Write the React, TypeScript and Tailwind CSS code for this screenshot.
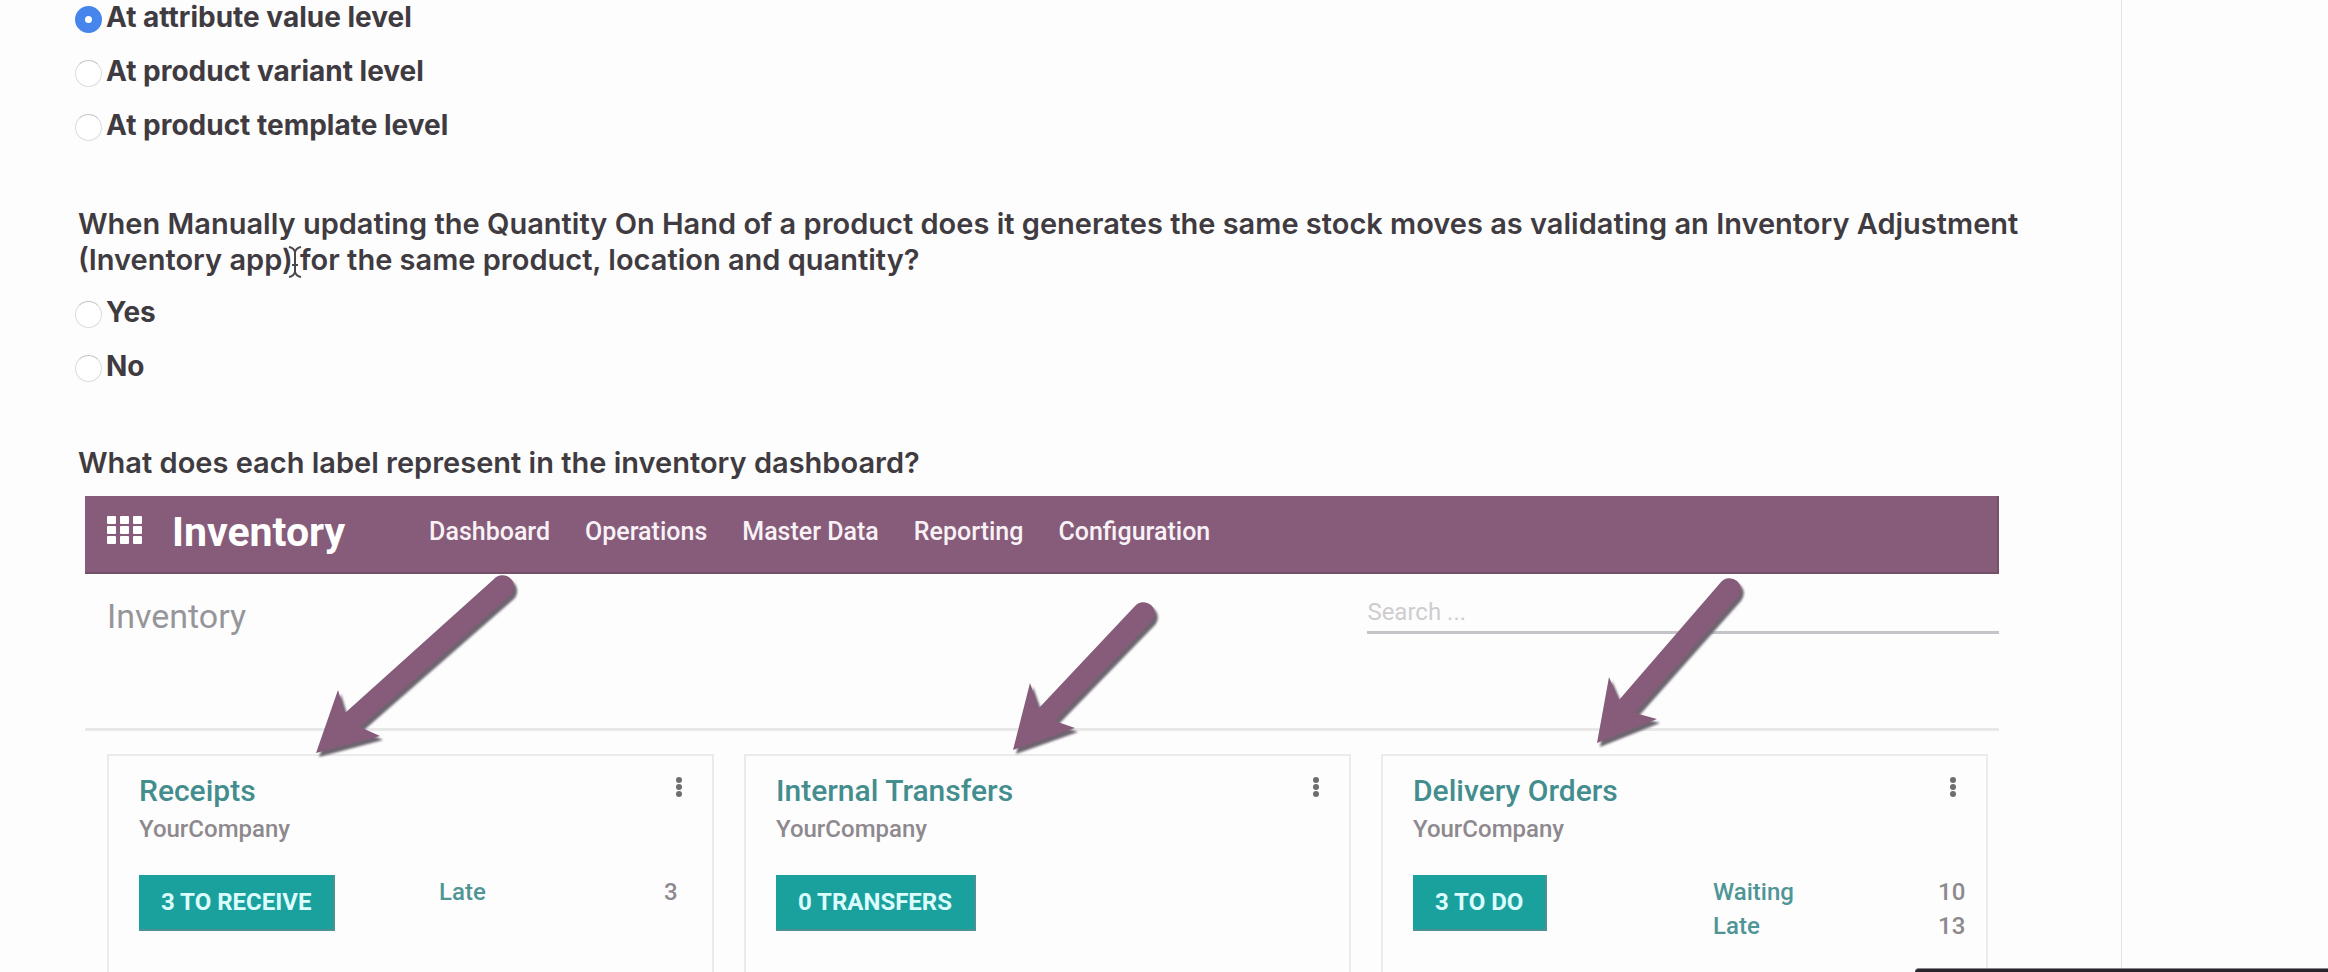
import { useId, useState } from "react";

type Stat = { label: string; value: number };
type Operation = { title: string; action: string; stats: Stat[] };

const operations: Operation[] = [
  { title: "Receipts", action: "3 TO RECEIVE", stats: [{ label: "Late", value: 3 }] },
  { title: "Internal Transfers", action: "0 TRANSFERS", stats: [] },
  {
    title: "Delivery Orders",
    action: "3 TO DO",
    stats: [
      { label: "Waiting", value: 10 },
      { label: "Late", value: 13 },
    ],
  },
];

const menu = ["Dashboard", "Operations", "Master Data", "Reporting", "Configuration"];

const arrows = [
  "M231 257 L253 194 L260 217 L409 83 A11 11 0 0 1 426 99 L275 231 L295 240 Z",
  "M928 254 L945 187 L954 212 L1050 110 A11 11 0 0 1 1067 125 L970 225 L990 232 Z",
  "M1512 247 L1524 181 L1534 204 L1636 86 A11 11 0 0 1 1653 101 L1550 217 L1572 223 Z",
];

function Choices({ legend, options, initial }: { legend: string; options: string[]; initial?: string }) {
  const name = useId();
  const [value, setValue] = useState(initial);
  return (
    <div role="radiogroup" aria-label={legend} className="flex flex-col gap-5 pl-[75px]">
      {options.map((option) => (
        <label key={option} className="flex items-start gap-1 text-[28px] font-bold leading-[34px]">
          <input
            type="radio"
            name={name}
            checked={value === option}
            onChange={() => setValue(option)}
            className="mt-1.5 size-[27px] shrink-0 appearance-none rounded-full border border-[#dcdcdc] border-t-[#c4c4c4] bg-white checked:border-[10px] checked:border-[#4686ec]"
          />
          {option}
        </label>
      ))}
    </div>
  );
}

function TextCursor() {
  return (
    <svg
      aria-hidden="true"
      viewBox="0 0 14 32"
      className="absolute left-[288px] top-10 h-8 w-3.5"
      fill="none"
      stroke="#4a474c"
      strokeWidth="2"
    >
      <path d="M1 1 Q6 2 7 6 Q8 2 13 1 M7 6 V26 M1 31 Q6 30 7 26 Q8 30 13 31 M4 19 H10" />
    </svg>
  );
}

function OperationCard({ title, action, stats }: Operation) {
  return (
    <article className="flex flex-1 flex-col border-2 border-b-0 border-[#ebebeb] pl-[30px] pr-5">
      <div className="flex items-start justify-between">
        <h3 className="mt-4 text-[30px] font-medium leading-[38px] text-[#438d8e]">{title}</h3>
        <button type="button" aria-label={`${title} menu`} className="mt-5 px-2.5">
          <svg viewBox="0 0 6 22" className="h-[22px] w-1.5" fill="#706c70">
            <circle cx="3" cy="4" r="3" />
            <circle cx="3" cy="11" r="3" />
            <circle cx="3" cy="18" r="3" />
          </svg>
        </button>
      </div>
      <p className="mt-0.5 text-2xl font-medium leading-[34px] text-[#8e898e]">YourCompany</p>
      <div className="mt-[29px] flex items-start justify-between">
        <button
          type="button"
          className="h-14 border-b-2 border-r-2 border-[#4b9392] bg-[#1ba19d] px-[22px] text-2xl font-bold text-[#dcfdfd]"
        >
          {action}
        </button>
        {stats.length > 0 && (
          <dl className="w-[253px] text-2xl font-medium leading-[34px]">
            {stats.map((stat) => (
              <div key={stat.label} className="flex justify-between">
                <dt className="text-[#4f9596]">{stat.label}</dt>
                <dd className="w-7 text-[#8e898e]">{stat.value}</dd>
              </div>
            ))}
          </dl>
        )}
      </div>
    </article>
  );
}

function InventoryDashboard() {
  return (
    <div className="relative ml-[85px] mr-[122px] mt-[15px] flex flex-1 flex-col font-['Roboto',sans-serif] font-normal">
      <header className="flex h-[78px] items-start border-b-2 border-r-2 border-[#755168] bg-[#875c7a] pl-[22px] text-white">
        <button type="button" aria-label="Apps" className="mt-5">
          <svg viewBox="0 0 35 28" className="h-7 w-[35px]" fill="currentColor">
            {[0, 10, 20].map((y) =>
              [0, 13, 26].map((x) => <rect key={`${x}-${y}`} x={x} y={y} width="9" height="8" rx="1" />),
            )}
          </svg>
        </button>
        <h2 className="ml-[30px] text-[41px] font-bold leading-[72px]">Inventory</h2>
        <nav className="ml-[84px] flex gap-[35px] text-[25px] font-medium leading-[72px] text-[#f8f2f6]">
          {menu.map((item) => (
            <a key={item} href="#">
              {item}
            </a>
          ))}
        </nav>
      </header>
      <div className="flex h-[157px] items-start justify-between border-b-[3px] border-[#e8e8e8]">
        <p className="ml-[22px] mt-[23px] text-[34px] leading-[38px] text-[#96969a]">Inventory</p>
        <input
          type="search"
          aria-label="Search"
          placeholder="Search ..."
          className="mt-[18px] h-[42px] w-[33%] border-b-[3px] border-[#c6c3c8] bg-transparent text-2xl outline-none placeholder:text-[#cfccd0]"
        />
      </div>
      <div className="ml-[22px] mr-[11px] mt-[23px] flex flex-1 gap-[30px]">
        {operations.map((operation) => (
          <OperationCard key={operation.title} {...operation} />
        ))}
      </div>
      <svg
        aria-hidden="true"
        viewBox="0 0 1914 476"
        className="pointer-events-none absolute inset-x-0 top-0 w-full drop-shadow-[3px_4px_1px_#6e6470]"
        fill="#875c7a"
      >
        {arrows.map((d) => (
          <path key={d} d={d} />
        ))}
      </svg>
    </div>
  );
}

export default function App() {
  return (
    <div className="flex min-h-screen bg-[#fdfdfd] font-['Inter',sans-serif] text-[29px] font-semibold text-[#3f3b41]">
      <main className="flex flex-1 flex-col border-r border-[#e4e4e4]">
        <Choices
          legend="Level"
          options={["At attribute value level", "At product variant level", "At product template level"]}
          initial="At attribute value level"
        />
        <div className="relative mt-16">
          <p className="pl-[78px] pr-[70px] leading-9">
            When Manually updating the Quantity On Hand of a product does it generates the same stock moves as
            validating an Inventory Adjustment (Inventory app) for the same product, location and quantity?
          </p>
          <TextCursor />
        </div>
        <div className="mt-[17px]">
          <Choices legend="Same stock moves" options={["Yes", "No"]} />
        </div>
        <p className="mt-[62px] pl-[78px] leading-9">What does each label represent in the inventory dashboard?</p>
        <InventoryDashboard />
      </main>
      <aside className="w-[206px]" />
      <div className="fixed bottom-0 right-0 h-1 w-[413px] rounded-tl-sm border-t border-[#8b898d] bg-[#29252c]" />
    </div>
  );
}
